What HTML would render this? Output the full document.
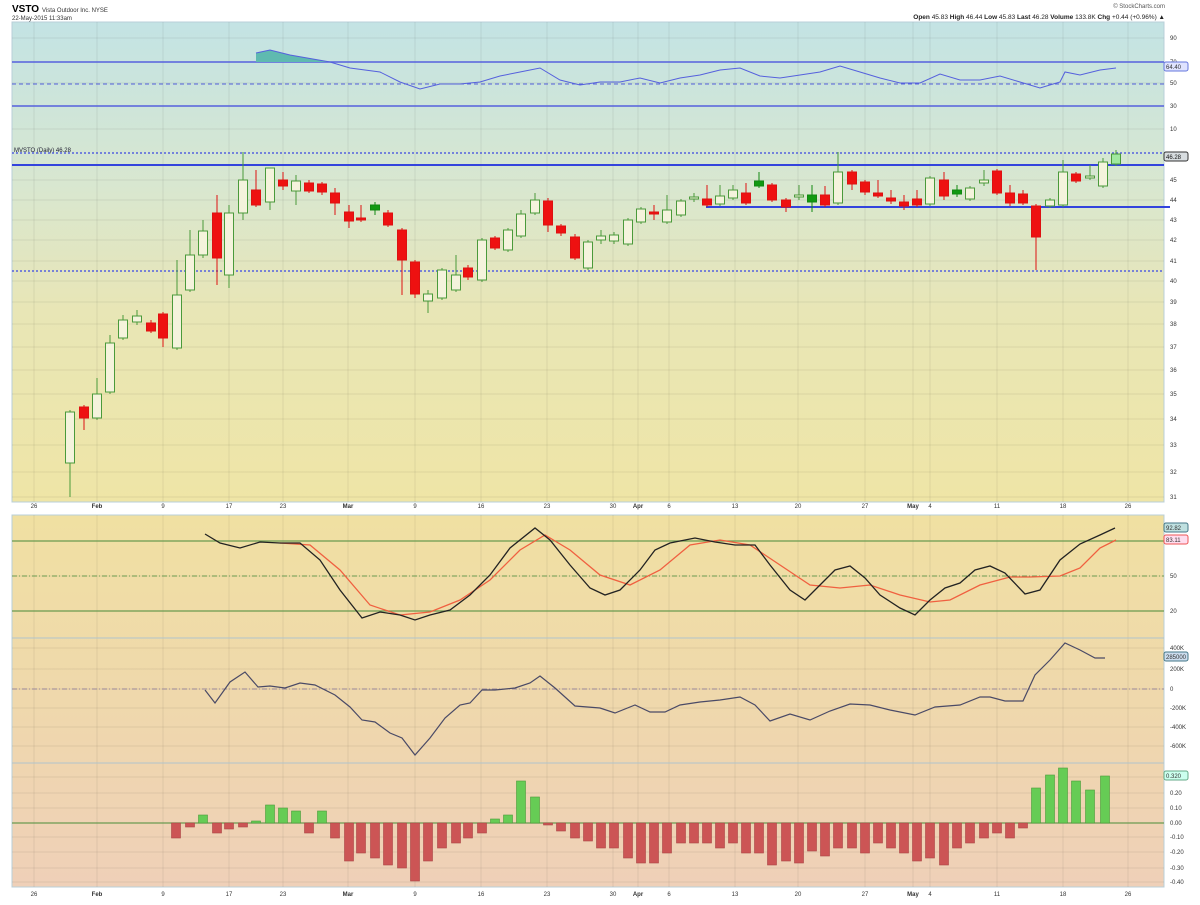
<!DOCTYPE html>
<html><head><meta charset="utf-8"><style>
body{margin:0;background:#fff;width:1200px;height:900px;overflow:hidden;font-family:"Liberation Sans",sans-serif}
svg text{font-family:"Liberation Sans",sans-serif}
</style></head><body>
<svg id="s" width="1200" height="900" xmlns="http://www.w3.org/2000/svg">
<defs>
<linearGradient id="g1" x1="0" y1="0" x2="0" y2="1">
<stop offset="0" stop-color="#c3e3e4"/><stop offset="0.35" stop-color="#d9e7cf"/><stop offset="0.6" stop-color="#e8e6b6"/><stop offset="1" stop-color="#efe5a6"/></linearGradient>
<linearGradient id="g2" x1="0" y1="0" x2="0" y2="1">
<stop offset="0" stop-color="#f0e0a2"/><stop offset="0.5" stop-color="#efd8ac"/><stop offset="1" stop-color="#efd0b8"/></linearGradient>
</defs>
<rect x="12" y="22" width="1152" height="480" fill="url(#g1)" stroke="#b8cfd8"/>
<rect x="12" y="515" width="1152" height="372" fill="url(#g2)" stroke="#b8cfd8"/>
<g id="grid" stroke="#000" stroke-opacity="0.07"></g>
<text x="12" y="12" font-size="10" font-weight="bold">VSTO</text>
<text x="42" y="12" font-size="6" fill="#333">Vista Outdoor Inc.  NYSE</text>
<text x="12" y="20" font-size="6" fill="#333">22-May-2015 11:33am</text>
<text x="1165" y="8" font-size="6" fill="#555" text-anchor="end">© StockCharts.com</text>
<text x="1165" y="19" font-size="6.5" text-anchor="end" fill="#222"><tspan font-weight="bold">Open</tspan> 45.83 <tspan font-weight="bold">High</tspan> 46.44 <tspan font-weight="bold">Low</tspan> 45.83 <tspan font-weight="bold">Last</tspan> 46.28 <tspan font-weight="bold">Volume</tspan> 133.8K <tspan font-weight="bold">Chg</tspan> +0.44 (+0.96%) ▲</text>
<text x="14" y="152" font-size="6" fill="#223">MVSTO (Daily) 46.28</text>
<g id="lines"></g>
<g id="cand"></g>
<g id="ax" font-size="6" fill="#333"></g>
</svg>
<script>
const S=document.getElementById('s'),NS='http://www.w3.org/2000/svg';
function el(t,a,p){const e=document.createElementNS(NS,t);for(const k in a)e.setAttribute(k,a[k]);(p||S).appendChild(e);return e}
const G=document.getElementById('grid'),L=document.getElementById('lines'),C=document.getElementById('cand'),A=document.getElementById('ax');
const dates=[[34,'26'],[97,'Feb'],[163,'9'],[229,'17'],[283,'23'],[348,'Mar'],[415,'9'],[481,'16'],[547,'23'],[613,'30'],[638,'Apr'],[669,'6'],[735,'13'],[798,'20'],[865,'27'],[913,'May'],[930,'4'],[997,'11'],[1063,'18'],[1128,'26']];
dates.forEach(([x,t])=>{el('line',{x1:x,x2:x,y1:22,y2:502},G);el('line',{x1:x,x2:x,y1:515,y2:887},G);
 [508,896].forEach(y=>{const e=el('text',{x:x,y:y,'text-anchor':'middle','font-size':6,fill:'#333','font-weight':isNaN(t)?'bold':'normal'},A);e.textContent=t})});
[38,62,83,106,129,180,200,220,240,261,281,302,324,347,370,394,419,445,472,497,541,576,611,648,669,689,708,727,746,777,793,808,823,837,852,868,882].forEach(y=>el('line',{x1:12,x2:1164,y1:y,y2:y},G));
function lab(y,t){const e=el('text',{x:1170,y:y+2},A);e.textContent=t}
[[38,'90'],[62,'70'],[83,'50'],[106,'30'],[129,'10'],[180,'45'],[200,'44'],[220,'43'],[240,'42'],[261,'41'],[281,'40'],[302,'39'],[324,'38'],[347,'37'],[370,'36'],[394,'35'],[419,'34'],[445,'33'],[472,'32'],[497,'31'],[576,'50'],[611,'20'],[648,'400K'],[669,'200K'],[689,'0'],[708,'-200K'],[727,'-400K'],[746,'-600K'],[793,'0.20'],[808,'0.10'],[823,'0.00'],[837,'-0.10'],[852,'-0.20'],[868,'-0.30'],[882,'-0.40']].forEach(a=>lab(a[0],a[1]));
function tag(y,t,bg,bd,fc){el('rect',{x:1164,y:y-5,width:24,height:9,rx:2,fill:bg,stroke:bd},A);const e=el('text',{x:1166,y:y+2,'font-size':6,fill:fc||'#333'},A);e.textContent=t}
tag(67,'64.40','#dfe3ff','#6677dd');tag(157,'46.28','#d8dde0','#333','#111');tag(528,'92.82','#bfe0e0','#478');tag(540,'83.11','#fde','#e55');tag(657,'285000','#cde','#478');tag(776,'0.320','#cfe','#6a8');
el('line',{x1:12,x2:1164,y1:638,y2:638,stroke:'#b0c4cc'},L);el('line',{x1:12,x2:1164,y1:763,y2:763,stroke:'#b0c4cc'},L);
el('line',{x1:12,x2:1164,y1:62,y2:62,stroke:'#5560dd','stroke-width':1.5},L);
el('line',{x1:12,x2:1164,y1:106,y2:106,stroke:'#5560dd','stroke-width':1.5},L);
el('line',{x1:12,x2:1164,y1:84,y2:84,stroke:'#5560dd','stroke-dasharray':'4 3'},L);
el('polygon',{points:'256,62 256,53 270,50 290,55 330,62',fill:'#5fbab0'},L);
const rsi=[[256,53],[270,50],[290,55],[330,62],[350,68],[380,72],[400,82],[420,89],[440,84],[460,84],[480,82],[500,76],[520,72],[540,68],[560,80],[580,85],[600,82],[620,82],[640,78],[660,83],[680,78],[700,75],[720,70],[740,68],[760,76],[780,78],[800,75],[820,72],[840,66],[860,72],[880,78],[900,83],[920,83],[940,74],[960,80],[980,80],[1000,76],[1020,82],[1040,88],[1060,82],[1065,72],[1080,75],[1100,70],[1116,68]];
el('polyline',{points:rsi.join(' '),fill:'none',stroke:'#5560dd','stroke-width':1},L);
el('line',{x1:12,x2:1164,y1:153,y2:153,stroke:'#5560dd','stroke-dasharray':'2 2','stroke-width':1.5},L);
el('line',{x1:12,x2:1164,y1:271,y2:271,stroke:'#5560dd','stroke-dasharray':'2 2','stroke-width':1.5},L);
el('line',{x1:12,x2:1164,y1:165,y2:165,stroke:'#3344dd','stroke-width':2},L);
el('line',{x1:706,x2:1170,y1:207,y2:207,stroke:'#3344dd','stroke-width':2},L);
const cd=[[70,412,463,410,497,'g'],[84,407,418,405,430,'r'],[97,394,418,378,420,'g'],[110,343,392,335,394,'g'],[123,320,338,315,340,'g'],[137,316,322,310,325,'g'],[151,323,331,320,333,'r'],[163,314,338,312,347,'r'],[177,295,348,260,350,'g'],[190,255,290,230,292,'g'],[203,231,255,220,258,'g'],[217,213,258,195,285,'r'],[229,213,275,205,288,'g'],[243,180,213,152,220,'g'],[256,190,205,170,207,'r'],[270,168,202,168,210,'g'],[283,180,186,172,190,'r'],[296,181,191,175,205,'g'],[309,183,191,180,193,'r'],[322,184,192,182,195,'r'],[335,193,203,188,215,'r'],[349,212,221,205,228,'r'],[361,218,220,205,222,'r'],[375,205,210,202,215,'f'],[388,213,225,210,227,'r'],[402,230,260,228,295,'r'],[415,262,294,260,298,'r'],[428,294,301,290,313,'g'],[442,270,298,268,300,'g'],[456,275,290,255,292,'g'],[468,268,277,265,280,'r'],[482,240,280,238,282,'g'],[495,238,248,236,250,'r'],[508,230,250,228,252,'g'],[521,214,236,210,238,'g'],[535,200,213,193,215,'g'],[548,201,225,198,232,'r'],[561,226,233,224,236,'r'],[575,237,258,234,260,'r'],[588,242,268,240,270,'g'],[601,236,240,230,244,'g'],[614,235,241,232,244,'g'],[628,220,244,218,246,'g'],[641,209,222,207,224,'g'],[654,212,214,205,220,'r'],[667,210,222,195,224,'g'],[681,201,215,199,217,'g'],[694,197,199,193,202,'g'],[707,199,205,185,207,'r'],[720,196,204,185,206,'g'],[733,190,198,185,200,'g'],[746,193,203,183,205,'r'],[759,181,186,172,188,'f'],[772,185,200,183,202,'r'],[786,200,207,198,212,'r'],[799,195,197,185,200,'g'],[812,195,202,185,212,'f'],[825,195,205,186,207,'r'],[838,172,203,152,205,'g'],[852,172,184,170,190,'r'],[865,182,192,180,195,'r'],[878,193,196,180,198,'r'],[891,198,201,190,204,'r'],[904,202,206,195,210,'r'],[917,199,205,190,207,'r'],[930,178,204,176,206,'g'],[944,180,196,172,200,'r'],[957,190,194,185,197,'f'],[970,188,199,186,201,'g'],[984,180,183,170,186,'g'],[997,171,193,169,195,'r'],[1010,193,203,185,206,'r'],[1023,194,203,190,205,'r'],[1036,206,237,204,270,'r'],[1050,200,206,198,208,'g'],[1063,172,205,160,207,'g'],[1076,174,181,172,183,'r'],[1090,176,178,165,180,'g'],[1103,162,186,158,188,'g'],[1116,154,164,150,166,'b']];
cd.forEach(([x,t,b,wt,wb,k])=>{const col=k=='r'?'#dd1111':k=='f'?'#118811':'#4a9a3a';
 el('line',{x1:x,x2:x,y1:wt,y2:wb,stroke:col},C);
 el('rect',{x:x-4.5,y:t,width:9,height:Math.max(1,b-t),fill:k=='r'?'#ee1111':k=='f'?'#119911':k=='b'?'#9fe89f':'#f4f3dc',stroke:col},C)});
[541,611].forEach(y=>el('line',{x1:12,x2:1164,y1:y,y2:y,stroke:'#6a9a50','stroke-width':1.3},L));
el('line',{x1:12,x2:1164,y1:576,y2:576,stroke:'#6a9a50','stroke-dasharray':'5 2 1 2'},L);
const red=[[280,543],[310,545],[340,570],[370,605],[400,615],[430,612],[460,600],[490,580],[520,550],[545,535],[570,550],[600,575],[630,585],[660,570],[690,545],[720,540],[750,545],[780,565],[810,585],[840,588],[870,585],[900,595],[930,602],[950,600],[980,585],[1010,577],[1030,577],[1060,576],[1080,568],[1100,548],[1116,540]];
el('polyline',{points:red.join(' '),fill:'none',stroke:'#f06040','stroke-width':1.3},L);
const blk=[[205,534],[220,543],[240,548],[260,542],[280,543],[300,543],[320,560],[340,590],[362,618],[380,612],[400,615],[415,620],[430,615],[450,610],[470,595],[490,575],[510,548],[535,528],[550,540],[570,565],[590,588],[605,595],[620,590],[640,570],[655,550],[670,543],[695,538],[715,542],[735,545],[755,545],[770,565],[790,590],[805,600],[820,585],[835,570],[850,566],[865,578],[880,595],[900,608],[915,615],[930,600],[945,588],[960,583],[975,570],[990,566],[1005,573],[1025,594],[1040,590],[1060,560],[1080,544],[1100,535],[1115,528]];
el('polyline',{points:blk.join(' '),fill:'none',stroke:'#222','stroke-width':1.3},L);
el('line',{x1:12,x2:1164,y1:689,y2:689,stroke:'#998899','stroke-dasharray':'5 2 1 2'},L);
const obv=[[205,690],[215,703],[230,682],[245,672],[258,687],[270,686],[285,688],[300,683],[315,685],[335,695],[350,707],[362,720],[375,722],[390,733],[402,738],[415,755],[430,738],[445,718],[460,705],[470,703],[482,690],[495,690],[515,688],[530,683],[540,676],[555,688],[575,706],[600,708],[615,713],[635,705],[650,712],[665,712],[680,705],[700,702],[720,700],[740,697],[755,705],[770,721],[790,714],[810,720],[830,711],[850,704],[870,705],[890,710],[915,715],[935,707],[960,705],[980,697],[990,697],[1005,701],[1023,701],[1035,675],[1050,660],[1065,643],[1080,650],[1095,658],[1105,658]];
el('polyline',{points:obv.join(' '),fill:'none',stroke:'#4a4a66','stroke-width':1.2},L);
el('line',{x1:12,x2:1164,y1:823,y2:823,stroke:'#6a9a50','stroke-width':1.3},L);
const hs=[[176,-15],[190,-4],[203,8],[217,-10],[229,-6],[243,-4],[256,2],[270,18],[283,15],[296,12],[309,-10],[322,12],[335,-15],[349,-38],[361,-30],[375,-35],[388,-42],[402,-45],[415,-58],[428,-38],[442,-25],[456,-20],[468,-15],[482,-10],[495,4],[508,8],[521,42],[535,26],[548,-2],[561,-8],[575,-15],[588,-18],[601,-25],[614,-25],[628,-35],[641,-40],[654,-40],[667,-30],[681,-20],[694,-20],[707,-20],[720,-25],[733,-20],[746,-30],[759,-30],[772,-42],[786,-38],[799,-40],[812,-28],[825,-33],[838,-25],[852,-25],[865,-30],[878,-20],[891,-25],[904,-30],[917,-38],[930,-35],[944,-42],[957,-25],[970,-20],[984,-15],[997,-10],[1010,-15],[1023,-5],[1036,35],[1050,48],[1063,55],[1076,42],[1090,33],[1105,47]];
hs.forEach(([x,v])=>{const p=v>0;el('rect',{x:x-4.5,y:p?823-v:823,width:9,height:Math.abs(v),fill:p?'#66cc55':'#cc5555',stroke:p?'#4a9a3a':'#aa4444','stroke-width':0.6},L)});
</script>
</body></html>
